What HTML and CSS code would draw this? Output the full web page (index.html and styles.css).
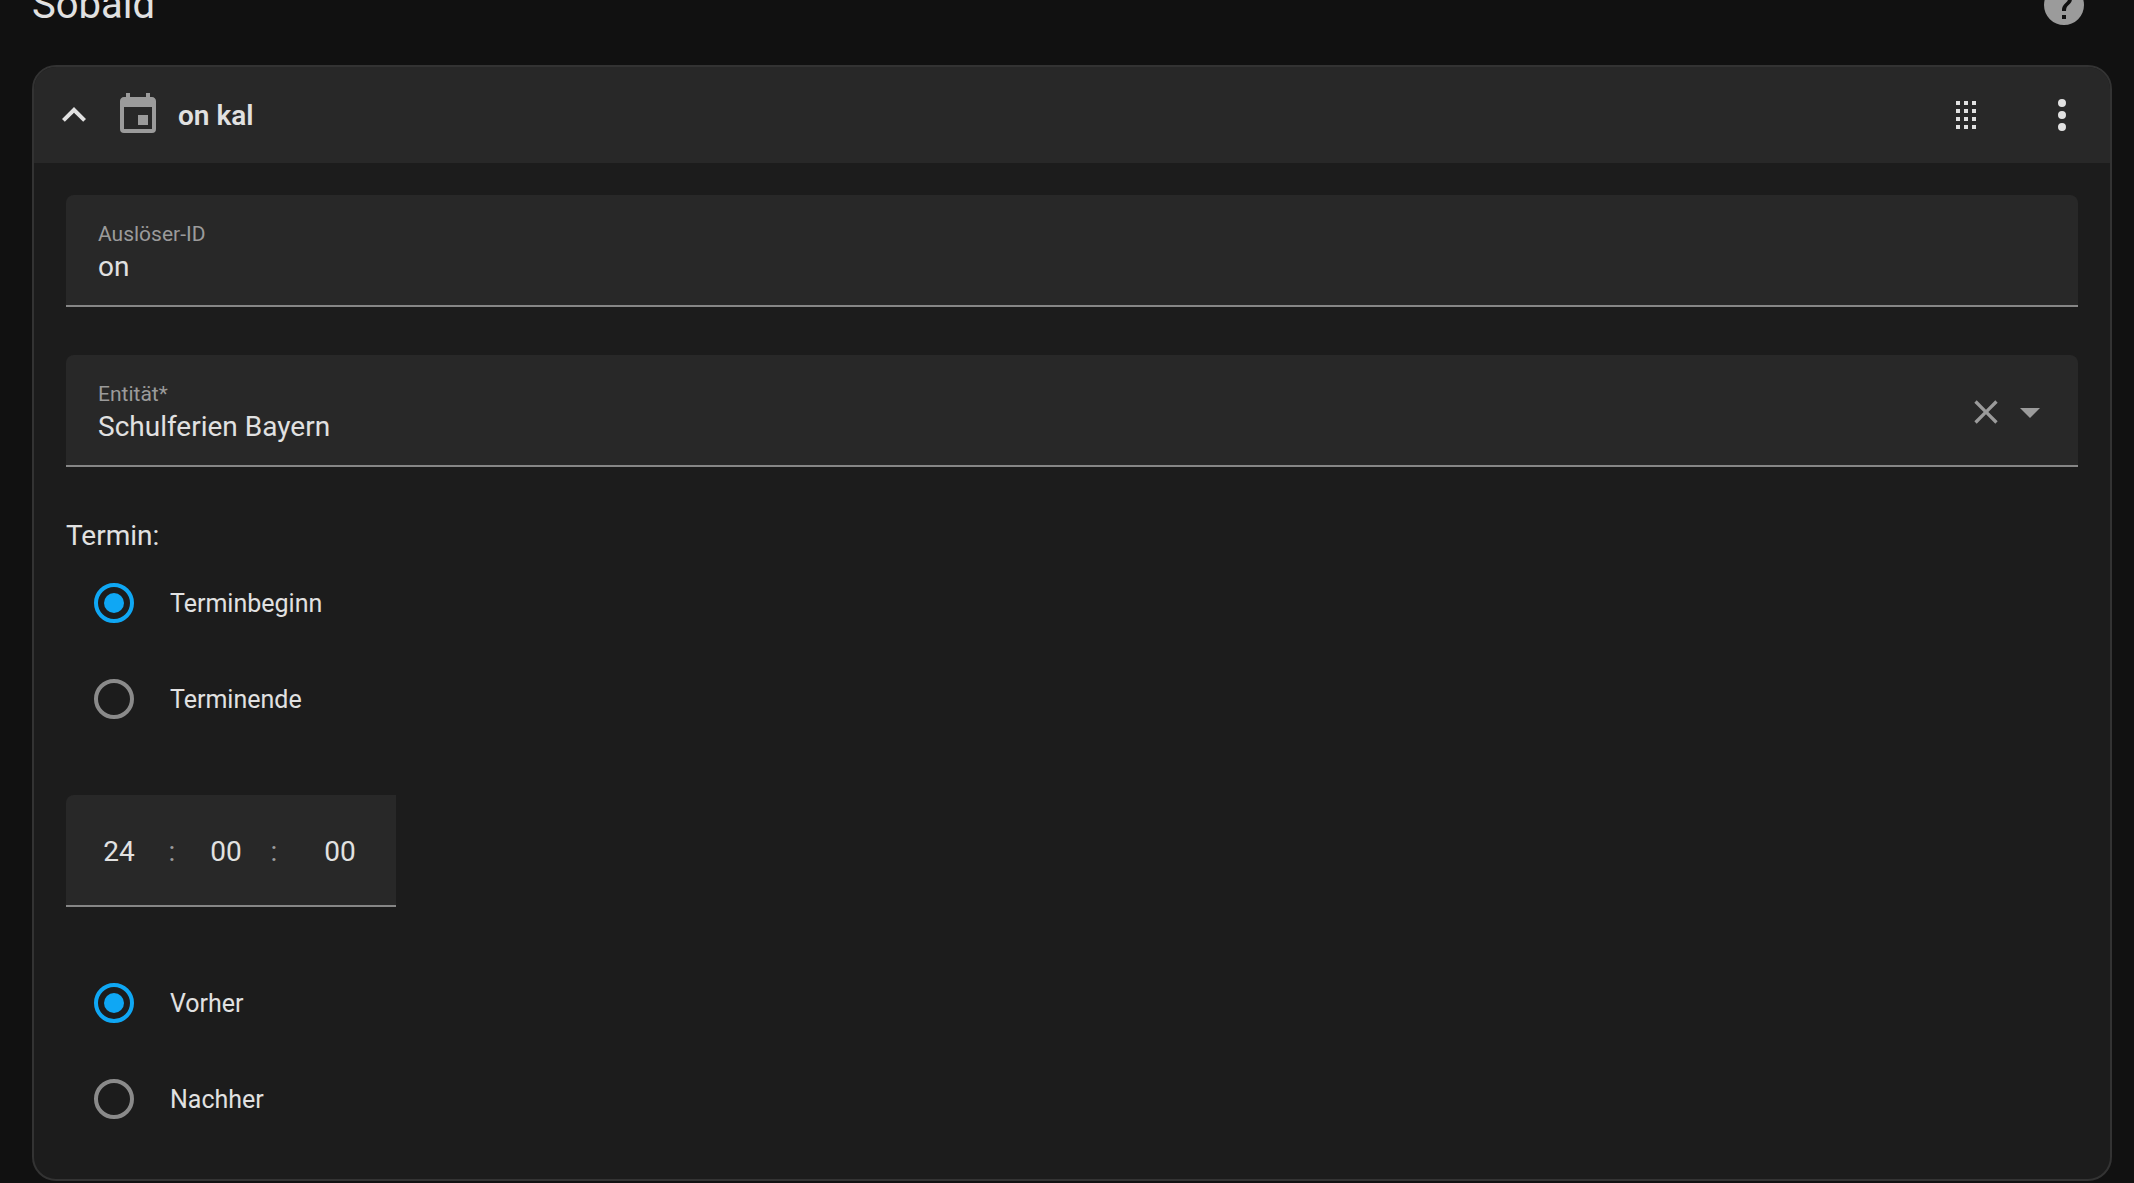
FILE: index.html
```
<!DOCTYPE html>
<html lang="de">
<head>
    <meta charset="UTF-8">
    <meta name="viewport" content="width=device-width, initial-scale=1.0">
    <title>Automatisierung</title>
    <link rel="stylesheet" href="styles.css">
</head>
<body>
    <div class="section-head">
        <h2>Sobald</h2>
        <a class="help" href="#" aria-label="Hilfe">
            <svg class="icon" viewBox="0 0 24 24"><path d="M15.07,11.25L14.17,12.17C13.45,12.89 13,13.5 13,15H11V14.5C11,13.39 11.45,12.39 12.17,11.67L13.41,10.41C13.78,10.05 14,9.55 14,9C14,7.89 13.1,7 12,7A2,2 0 0,0 10,9H8A4,4 0 0,1 12,5A4,4 0 0,1 16,9C16,9.88 15.64,10.67 15.07,11.25M13,19H11V17H13M12,2A10,10 0 0,0 2,12A10,10 0 0,0 12,22A10,10 0 0,0 22,12C22,6.47 17.5,2 12,2Z"/></svg>
        </a>
    </div>

    <form class="card">
        <div class="card-head">
            <button type="button" class="icon-button" aria-label="Einklappen">
                <svg class="icon" viewBox="0 0 24 24"><path d="M7.41,15.41L12,10.83L16.59,15.41L18,14L12,8L6,14L7.41,15.41Z"/></svg>
            </button>
            <svg class="icon muted" viewBox="0 0 24 24"><path d="M19,19H5V8H19M16,1V3H8V1H6V3H5C3.89,3 3,3.89 3,5V19A2,2 0 0,0 5,21H19A2,2 0 0,0 21,19V5C21,3.89 20.1,3 19,3H18V1M17,12H12V17H17V12Z"/></svg>
            <h3>on kal</h3>
            <div class="actions">
                <button type="button" class="icon-button" aria-label="Verschieben">
                    <svg class="icon" viewBox="0 0 24 24"><path d="M7,19V17H9V19H7M11,19V17H13V19H11M15,19V17H17V19H15M7,15V13H9V15H7M11,15V13H13V15H11M15,15V13H17V15H15M7,11V9H9V11H7M11,11V9H13V11H11M15,11V9H17V11H15M7,7V5H9V7H7M11,7V5H13V7H11M15,7V5H17V7H15Z"/></svg>
                </button>
                <button type="button" class="icon-button" aria-label="Menü">
                    <svg class="icon" viewBox="0 0 24 24"><path d="M12,16A2,2 0 0,1 14,18A2,2 0 0,1 12,20A2,2 0 0,1 10,18A2,2 0 0,1 12,16M12,10A2,2 0 0,1 14,12A2,2 0 0,1 12,14A2,2 0 0,1 10,12A2,2 0 0,1 12,10M12,4A2,2 0 0,1 14,6A2,2 0 0,1 12,8A2,2 0 0,1 10,6A2,2 0 0,1 12,4Z"/></svg>
                </button>
            </div>
        </div>

        <div class="card-content">
            <div class="field">
                <div class="field-text">
                    <label for="trigger-id">Auslöser-ID</label>
                    <input type="text" id="trigger-id" value="on">
                </div>
            </div>

            <div class="field">
                <div class="field-text">
                    <label for="entity">Entität*</label>
                    <input type="text" id="entity" value="Schulferien Bayern" required>
                </div>
                <button type="button" class="icon-button clear" aria-label="Löschen">
                    <svg class="icon small" viewBox="0 0 24 24"><path d="M19,6.41L17.59,5L12,10.59L6.41,5L5,6.41L10.59,12L5,17.59L6.41,19L12,13.41L17.59,19L19,17.59L13.41,12L19,6.41Z"/></svg>
                </button>
                <button type="button" class="icon-button" aria-label="Öffnen">
                    <svg class="icon muted" viewBox="0 0 24 24"><path d="M7,10L12,15L17,10H7Z"/></svg>
                </button>
            </div>

            <fieldset>
                <legend>Termin:</legend>
                <label class="option"><input type="radio" name="event" value="start" checked>Terminbeginn</label>
                <label class="option"><input type="radio" name="event" value="end">Terminende</label>
            </fieldset>

            <div class="field duration">
                <input type="text" inputmode="numeric" aria-label="Stunden" value="24">
                <span>:</span>
                <input type="text" inputmode="numeric" aria-label="Minuten" value="00">
                <span>:</span>
                <input type="text" inputmode="numeric" aria-label="Sekunden" value="00">
            </div>

            <fieldset aria-label="Versatz">
                <label class="option"><input type="radio" name="offset" value="before" checked>Vorher</label>
                <label class="option"><input type="radio" name="offset" value="after">Nachher</label>
            </fieldset>
        </div>
    </form>
</body>
</html>
```
FILE: styles.css
```
* {
    margin: 0;
    padding: 0;
    box-sizing: border-box;
}

body {
    padding: 0 22px 2px 32px;
    font-family: Roboto, sans-serif;
    font-size: 28px;
    color: #e1e1e1;
    background-color: #111111;
}

input, button {
    font: inherit;
    color: inherit;
    background: none;
    border: none;
    outline: none;
}

.icon {
    display: block;
    flex: none;
    width: 48px;
    height: 48px;
    fill: currentColor;
}

.icon.small {
    width: 40px;
    height: 40px;
}

.muted {
    color: #9b9b9b;
}

.icon-button {
    cursor: pointer;
}

/* scrolled partly out of view */
.section-head {
    display: flex;
    justify-content: space-between;
    align-items: center;
    height: 48px;
    margin: -19px 0 36px;
    padding-right: 24px;
}

.section-head h2 {
    font-size: 40px;
    font-weight: 400;
    line-height: 48px;
}

.help {
    color: #9b9b9b;
}

.card {
    background-color: #1c1c1c;
    border: 2px solid #333333;
    border-radius: 24px;
    overflow: hidden;
}

.card-head {
    display: flex;
    align-items: center;
    gap: 16px;
    height: 96px;
    padding: 0 24px 0 16px;
    background-color: #282828;
}

.card-head h3 {
    font-size: 28px;
    font-weight: 600;
}

.actions {
    display: flex;
    gap: 48px;
    margin-left: auto;
}

.card-content {
    display: flex;
    flex-direction: column;
    gap: 48px;
    padding: 32px;
}

.field {
    display: flex;
    align-items: center;
    height: 112px;
    padding: 4px 24px 0 32px;
    background-color: #282828;
    border-bottom: 2px solid #868686;
    border-radius: 8px 8px 0 0;
}

.field-text {
    flex: 1;
}

.field-text label {
    display: block;
    font-size: 21px;
    line-height: 28px;
    color: #9b9b9b;
}

.field-text input {
    display: block;
    width: 100%;
    height: 36px;
}

.clear {
    color: #9b9b9b;
}

fieldset {
    border: none;
}

legend {
    padding-top: 2px;
    line-height: 38px;
}

.option {
    display: flex;
    align-items: center;
    gap: 36px;
    height: 96px;
    padding-left: 28px;
    font-size: 25px;
}

.option input {
    appearance: none;
    width: 40px;
    height: 40px;
    border: 4px solid #8a8a8a;
    border-radius: 50%;
}

.option input:checked {
    padding: 6px;
    border-color: #0fa7f4;
    background: #0fa7f4 content-box;
}

.duration {
    display: grid;
    grid-template-columns: 74px 32px 76px 20px 112px;
    align-self: flex-start;
    padding: 2px 0 0 16px;
    border-top-right-radius: 0;
    text-align: center;
}

.duration input {
    width: 100%;
    text-align: center;
}

.duration span {
    color: #9b9b9b;
}
```
